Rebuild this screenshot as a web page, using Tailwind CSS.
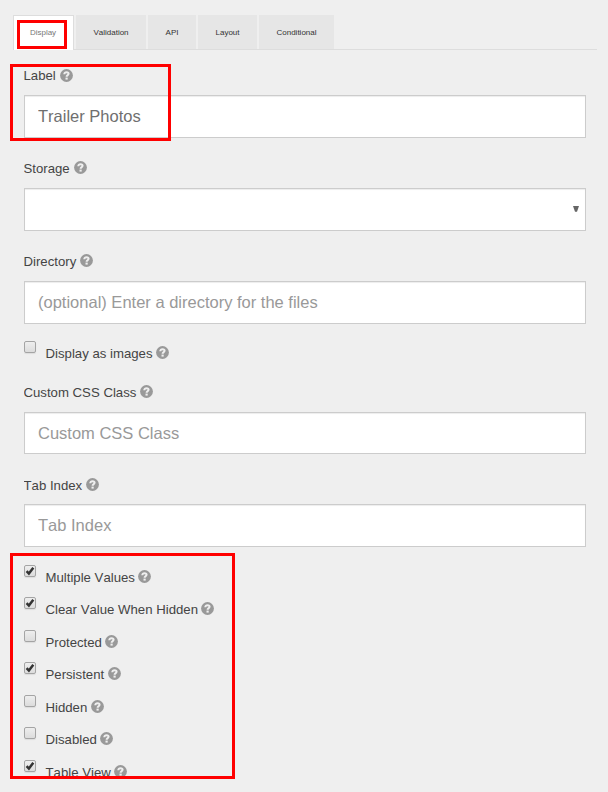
<!DOCTYPE html>
<html lang="en">
<head>
<meta charset="utf-8">
<title>File component settings</title>
<script src="https://cdn.jsdelivr.net/npm/@tailwindcss/browser@4"></script>
</head>
<body class="relative h-[792px] w-[608px] overflow-hidden bg-[#efefef] text-[13.2px] leading-5 text-[#444] [font-kerning:none] font-['Liberation_Sans',Arial,sans-serif]">
<svg class="hidden">
  <symbol id="help" viewBox="0 0 13 13"><circle cx="6.5" cy="6.5" r="6.4" fill="#999"/><path d="M4.3 5.2C4.3 3.8 5.2 3.2 6.5 3.2C7.9 3.2 8.6 3.9 8.6 4.8C8.6 6.1 6.6 6.1 6.6 7.7" fill="none" stroke="#efefef" stroke-width="2"/><path d="M5.5 8.6h2.2v2H5.5z" fill="#efefef"/></symbol>
  <symbol id="check" viewBox="0 0 12 12"><path d="M2.6 6.1L4.9 8.5L9.3 2.8" fill="none" stroke="#333" stroke-width="2.5"/></symbol>
</svg>

<nav class="ml-[13px] mr-[11px] flex h-[50px] items-end border-b border-[#ddd] text-[8px] text-[#333]">
  <div class="-mb-px mr-[2px] flex h-[35px] w-[61px] items-center justify-center border border-b-0 border-[#ddd] bg-white pr-px text-[#777]">Display</div>
  <div class="mr-[2px] flex h-[34px] w-[70px] items-center justify-center bg-[#e6e6e6] pt-[2px]">Validation</div>
  <div class="mr-[2px] flex h-[34px] w-[48px] items-center justify-center bg-[#e6e6e6] pt-[2px]">API</div>
  <div class="mr-[2px] flex h-[34px] w-[59px] items-center justify-center bg-[#e6e6e6] pt-[2px]">Layout</div>
  <div class="flex h-[34px] w-[75px] items-center justify-center bg-[#e6e6e6] pt-[2px]">Conditional</div>
</nav>

<form class="ml-6 mr-[22px] h-[727px] overflow-hidden pt-4">
  <div class="h-[93px]">
    <label class="-ml-[0.5px] flex h-[29px] gap-1">Label <svg class="mt-[3px] size-[13px]"><use href="#help"/></svg></label>
    <input type="text" value="Trailer Photos" class="block h-[43px] w-full border border-[#ccc] bg-white px-[13px] text-[16.5px] text-[#6f6f6f] shadow-[inset_0_1px_1px_rgba(0,0,0,0.075)]">
  </div>
  <div class="h-[93px]">
    <label class="-ml-[0.5px] flex h-[29px] gap-1">Storage <svg class="mt-[2px] size-[13px]"><use href="#help"/></svg></label>
    <div class="flex h-[43px] w-full items-start justify-end border border-[#ccc] bg-white pr-[6px] pt-[17px] shadow-[inset_0_1px_1px_rgba(0,0,0,0.075)]"><svg class="h-[6px] w-[6px]" viewBox="0 0 6 6"><path d="M0 0h6L4 5.8H2z" fill="#666"/></svg></div>
  </div>
  <div class="h-[89px]">
    <label class="-ml-[0.5px] flex h-[29px] gap-1">Directory <svg class="mt-[2px] size-[13px]"><use href="#help"/></svg></label>
    <input type="text" placeholder="(optional) Enter a directory for the files" class="block h-[43px] w-full border border-[#ccc] bg-white px-[13px] text-[16.5px] placeholder:text-[#999] shadow-[inset_0_1px_1px_rgba(0,0,0,0.075)]">
  </div>
  <label class="flex h-[42px] items-start"><span class="mr-[9.5px] size-3 rounded-[2px] border border-[#a4a4a4] bg-linear-to-b from-[#eee] to-[#dcdcdc] shadow-[0_1px_1px_rgba(0,0,0,0.08)]"></span><span class="mt-[3px]">Display as images</span><svg class="ml-[3.5px] mt-[5px] size-[13px]"><use href="#help"/></svg></label>
  <div class="h-[93px]">
    <label class="-ml-[0.5px] flex h-[29px] gap-1">Custom CSS Class <svg class="mt-[2px] size-[13px]"><use href="#help"/></svg></label>
    <input type="text" placeholder="Custom CSS Class" class="block h-[42px] w-full border border-[#ccc] bg-white px-[13px] text-[16.5px] placeholder:text-[#999] shadow-[inset_0_1px_1px_rgba(0,0,0,0.075)]">
  </div>
  <div class="h-[89px]">
    <label class="-ml-[0.5px] flex h-[28px] gap-1">Tab Index <svg class="mt-[2px] size-[13px]"><use href="#help"/></svg></label>
    <input type="text" placeholder="Tab Index" class="block h-[43px] w-full border border-[#ccc] bg-white px-[13px] text-[16.5px] placeholder:text-[#999] shadow-[inset_0_1px_1px_rgba(0,0,0,0.075)]">
  </div>
  <label class="flex h-[32px] items-start"><span class="mr-[9.5px] size-3 rounded-[2px] border border-[#a4a4a4] bg-linear-to-b from-[#eee] to-[#dcdcdc] shadow-[0_1px_1px_rgba(0,0,0,0.08)]"><svg class="-m-px size-3"><use href="#check"/></svg></span><span class="mt-[3px]">Multiple Values</span><svg class="ml-[3.5px] mt-[5px] size-[13px]"><use href="#help"/></svg></label>
  <label class="flex h-[33px] items-start"><span class="mr-[9.5px] size-3 rounded-[2px] border border-[#a4a4a4] bg-linear-to-b from-[#eee] to-[#dcdcdc] shadow-[0_1px_1px_rgba(0,0,0,0.08)]"><svg class="-m-px size-3"><use href="#check"/></svg></span><span class="mt-[3px]">Clear Value When Hidden</span><svg class="ml-[3.5px] mt-[5px] size-[13px]"><use href="#help"/></svg></label>
  <label class="flex h-[32px] items-start"><span class="mr-[9.5px] size-3 rounded-[2px] border border-[#a4a4a4] bg-linear-to-b from-[#eee] to-[#dcdcdc] shadow-[0_1px_1px_rgba(0,0,0,0.08)]"></span><span class="mt-[3px]">Protected</span><svg class="ml-[3.5px] mt-[5px] size-[13px]"><use href="#help"/></svg></label>
  <label class="flex h-[33px] items-start"><span class="mr-[9.5px] size-3 rounded-[2px] border border-[#a4a4a4] bg-linear-to-b from-[#eee] to-[#dcdcdc] shadow-[0_1px_1px_rgba(0,0,0,0.08)]"><svg class="-m-px size-3"><use href="#check"/></svg></span><span class="mt-[3px]">Persistent</span><svg class="ml-[3.5px] mt-[5px] size-[13px]"><use href="#help"/></svg></label>
  <label class="flex h-[32px] items-start"><span class="mr-[9.5px] size-3 rounded-[2px] border border-[#a4a4a4] bg-linear-to-b from-[#eee] to-[#dcdcdc] shadow-[0_1px_1px_rgba(0,0,0,0.08)]"></span><span class="mt-[3px]">Hidden</span><svg class="ml-[3.5px] mt-[5px] size-[13px]"><use href="#help"/></svg></label>
  <label class="flex h-[33px] items-start"><span class="mr-[9.5px] size-3 rounded-[2px] border border-[#a4a4a4] bg-linear-to-b from-[#eee] to-[#dcdcdc] shadow-[0_1px_1px_rgba(0,0,0,0.08)]"></span><span class="mt-[3px]">Disabled</span><svg class="ml-[3.5px] mt-[5px] size-[13px]"><use href="#help"/></svg></label>
  <label class="flex h-[32px] items-start"><span class="mr-[9.5px] size-3 rounded-[2px] border border-[#a4a4a4] bg-linear-to-b from-[#eee] to-[#dcdcdc] shadow-[0_1px_1px_rgba(0,0,0,0.08)]"><svg class="-m-px size-3"><use href="#check"/></svg></span><span class="mt-[3px]">Table View</span><svg class="ml-[3.5px] mt-[5px] size-[13px]"><use href="#help"/></svg></label>
</form>

<!-- Highlight frames laid over the form -->
<div class="pointer-events-none absolute left-[17px] top-[20px] h-[29px] w-[50px] border-3 border-[#f00]"></div>
<div class="pointer-events-none absolute left-[10px] top-[64px] h-[77px] w-[161px] border-3 border-[#f00]"></div>
<div class="pointer-events-none absolute left-[10px] top-[553px] h-[226px] w-[225px] border-3 border-[#f00]"></div>
</body>
</html>
